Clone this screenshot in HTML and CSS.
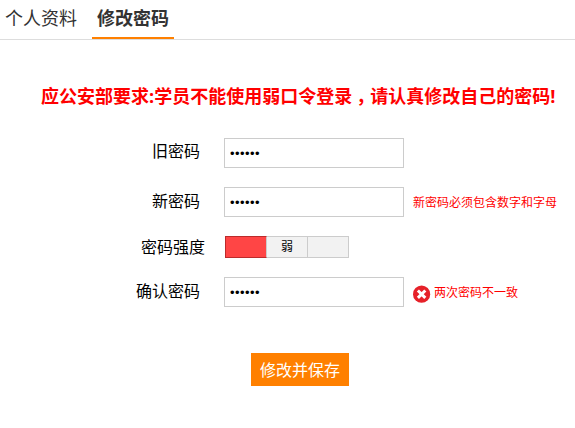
FILE: index.html
```html
<!DOCTYPE html>

<html lang="zh-CN">

	<head>

		<meta charset="utf-8">

		<title>修改密码</title>

		<link rel="stylesheet" href="styles.css">

	</head>

	<body>

		<ul id="tabs">
			<li><a href="#">个人资料</a></li>
			<li class="current"><a href="#">修改密码</a></li>
		</ul>

		<p id="notice">应公安部要求:学员不能使用弱口令登录<span class="comma">，</span>请认真修改自己的密码!</p>

		<form id="password">

			<div class="row">
				<label for="old">旧密码</label>
				<input type="password" id="old" value="123456">
			</div>

			<div class="row">
				<label for="new">新密码</label>
				<input type="password" id="new" value="123456">
				<span class="tip">新密码必须包含数字和字母</span>
			</div>

			<div class="row strength">
				<span class="label">密码强度</span>
				<ol class="meter">
					<li class="on"></li>
					<li>弱</li>
					<li></li>
				</ol>
			</div>

			<div class="row">
				<label for="confirm">确认密码</label>
				<input type="password" id="confirm" value="123456">
				<span class="tip error">
					<svg width="18" height="18" viewBox="0 0 18 18">
						<circle cx="8.6" cy="9.2" r="8.6" fill="#e62129"/>
						<path d="M4.9 5.5l7.4 7.4M12.3 5.5l-7.4 7.4" stroke="#fff" stroke-width="3"/>
					</svg>
					两次密码不一致
				</span>
			</div>

			<button type="button" id="save">修改并保存</button>

		</form>

	</body>

</html>
```

FILE: styles.css
```css
* {margin:0; padding:0; box-sizing:border-box;}
body {font:16px/20px "Liberation Sans","Noto Sans CJK SC",sans-serif; background:#fff; color:#000;}

ul#tabs {display:flex; gap:10px; height:40px; border-bottom:1px solid #ddd; list-style:none;}
ul#tabs li {height:39px; padding:0 5px; font-size:18px; line-height:38px;}
ul#tabs a {color:#333; text-decoration:none;}
ul#tabs li.current {border-bottom:2px solid #ff8000; font-weight:bold;}

p#notice {height:26px; margin:43px 0 0 41px; font:bold 18px/26px "Open Sans","Noto Sans CJK SC",sans-serif; color:#f00; white-space:nowrap;}
span.comma {display:inline-block; width:18px; padding-left:4px; font-feature-settings:"halt";}

form#password {margin-top:29px;}
div.row {display:flex; height:30px; margin-bottom:19px;}
div.row label, div.row .label {width:200px; line-height:30px; text-align:right;}
div.row:first-child label {line-height:28px;}
div.row input {width:180px; height:30px; margin-left:24px; padding:1px 5px 0; border:1px solid #ccc; font:13px "Liberation Sans",sans-serif; letter-spacing:0.45px; outline:none;}
div.row.strength {height:22px;}
div.strength .label {width:205px; line-height:24px;}

ol.meter {display:flex; width:124px; margin-left:20px; list-style:none;}
ol.meter li {flex:1; border:1px solid #ccc; border-left:0; background:#f2f2f2; font-size:12px; line-height:20px; text-align:center;}
ol.meter li.on {border:1px solid #bb2b2b; border-right-color:#ccc; background:#ff4545;}

span.tip {margin-left:9px; font-size:12px; line-height:32px; color:#f00;}
span.error {display:flex; gap:3px;}
span.error svg {margin-top:8px;}

button#save {display:block; width:98px; height:33px; margin:46px 0 0 251px; border:0; background:#ff8000; color:#fff; font:16px/33px "Noto Sans CJK SC",sans-serif; cursor:pointer;}
```
